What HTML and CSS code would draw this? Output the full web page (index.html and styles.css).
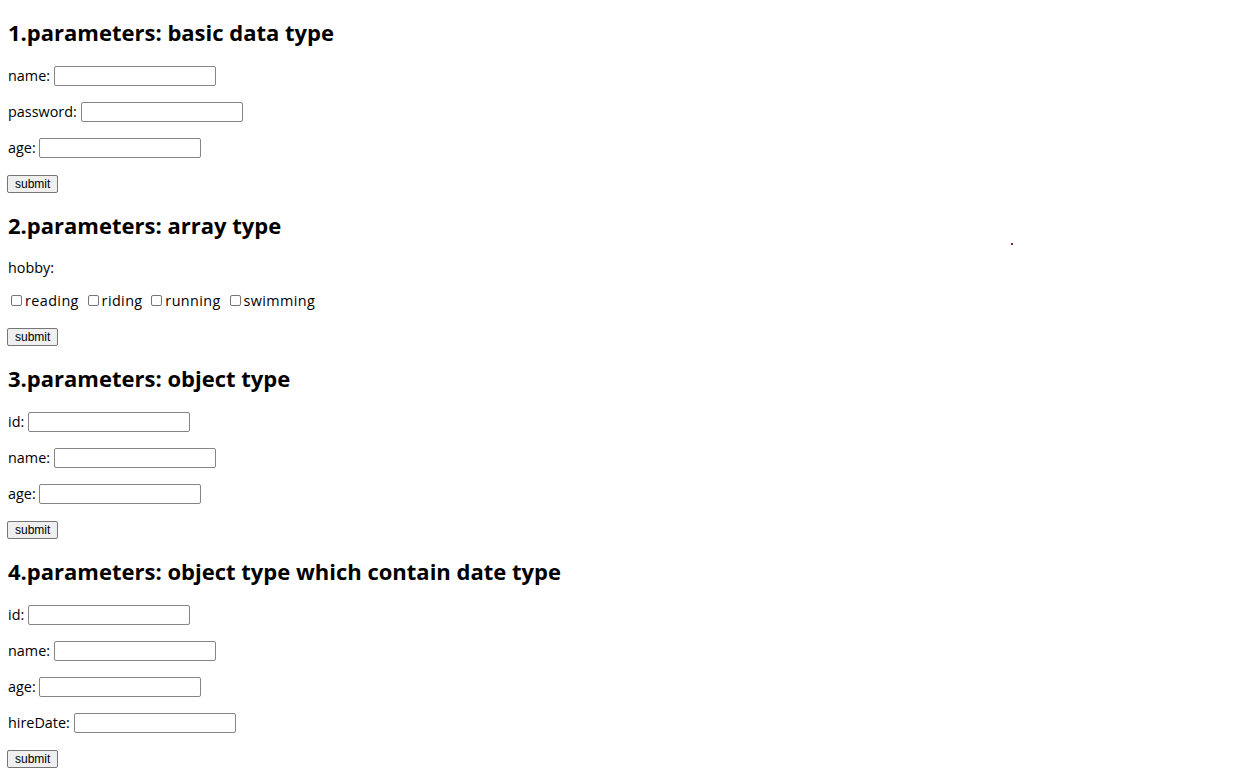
FILE: index.html
```html
<!DOCTYPE html>
<html lang="en">
<head>
<meta charset="utf-8">
<title>parameters</title>
<link rel="stylesheet" href="styles.css">
</head>
<body>
<main class="page">
  <section class="group">
    <h2 class="title">1.parameters: basic data type</h2>
    <form class="form">
      <label class="row">name: <input class="field" type="text"></label>
      <label class="row">password: <input class="field" type="password"></label>
      <label class="row">age: <input class="field" type="text"></label>
      <div class="actions"><button class="submit" type="button">submit</button></div>
    </form>
  </section>
  <section class="group">
    <h2 class="title">2.parameters: array type</h2>
    <form class="form">
      <div class="row row-text">hobby:</div>
      <div class="row checks"><label class="option"><input class="check" type="checkbox">reading</label> <label class="option"><input class="check" type="checkbox">riding</label> <label class="option"><input class="check" type="checkbox">running</label> <label class="option"><input class="check" type="checkbox">swimming</label></div>
      <div class="actions"><button class="submit" type="button">submit</button></div>
    </form>
  </section>
  <section class="group">
    <h2 class="title">3.parameters: object type</h2>
    <form class="form">
      <label class="row">id: <input class="field" type="text"></label>
      <label class="row">name: <input class="field" type="text"></label>
      <label class="row">age: <input class="field" type="text"></label>
      <div class="actions"><button class="submit" type="button">submit</button></div>
    </form>
  </section>
  <section class="group">
    <h2 class="title">4.parameters: object type which contain date type</h2>
    <form class="form">
      <label class="row">id: <input class="field" type="text"></label>
      <label class="row">name: <input class="field" type="text"></label>
      <label class="row">age: <input class="field" type="text"></label>
      <label class="row">hireDate: <input class="field" type="text"></label>
      <div class="actions"><button class="submit" type="button">submit</button></div>
    </form>
  </section>
</main>
<span class="speck"></span>
</body>
</html>
```

FILE: styles.css
```css
html, body {
  margin: 0;
  background: #ffffff;
}

body {
  font-family: "Open Sans", "Noto Sans", sans-serif;
  font-size: 14.4px;
  color: #000000;
}

.page {
  padding: 16px 8px 0;
}

.title {
  font-size: 22px;
  font-weight: 700;
  line-height: 32px;
  margin: 0 0 18px;
}

.form {
  margin: 0;
}

.row {
  display: block;
  height: 20px;
  line-height: 20px;
  margin: 0 0 16px;
  white-space: nowrap;
}

.row-text {
  height: 17px;
  line-height: 17px;
  margin-bottom: 15px;
}

.field {
  box-sizing: border-box;
  width: 162px;
  height: 20px;
  margin: 0;
  padding: 1px 2px;
  border: 1px solid #858585;
  border-radius: 2px;
  background: #ffffff;
  font: 12px "Liberation Sans", Arial, sans-serif;
  vertical-align: top;
}

.checks {
  word-spacing: 2px;
}

.option {
  white-space: nowrap;
  letter-spacing: 0.4px;
  word-spacing: 0;
}

.check {
  -webkit-appearance: none;
  appearance: none;
  box-sizing: border-box;
  display: inline-block;
  width: 11px;
  height: 11px;
  margin: 0 3px 0 3px;
  border: 1px solid #767676;
  border-radius: 2px;
  background: #ffffff;
  vertical-align: baseline;
}

.actions {
  display: flex;
  align-items: center;
  height: 20px;
  margin: 0 0 15px;
}

.submit {
  box-sizing: border-box;
  height: 18px;
  margin: 0 0 0 -1px;
  padding: 0 7px;
  border: 1px solid #767676;
  border-radius: 2px;
  background: #efefef;
  color: #000000;
  font: 12px "Liberation Sans", Arial, sans-serif;
  line-height: 16px;
}

.speck {
  position: absolute;
  left: 1011px;
  top: 243px;
  width: 2px;
  height: 2px;
  background: #7d2248;
}
```
